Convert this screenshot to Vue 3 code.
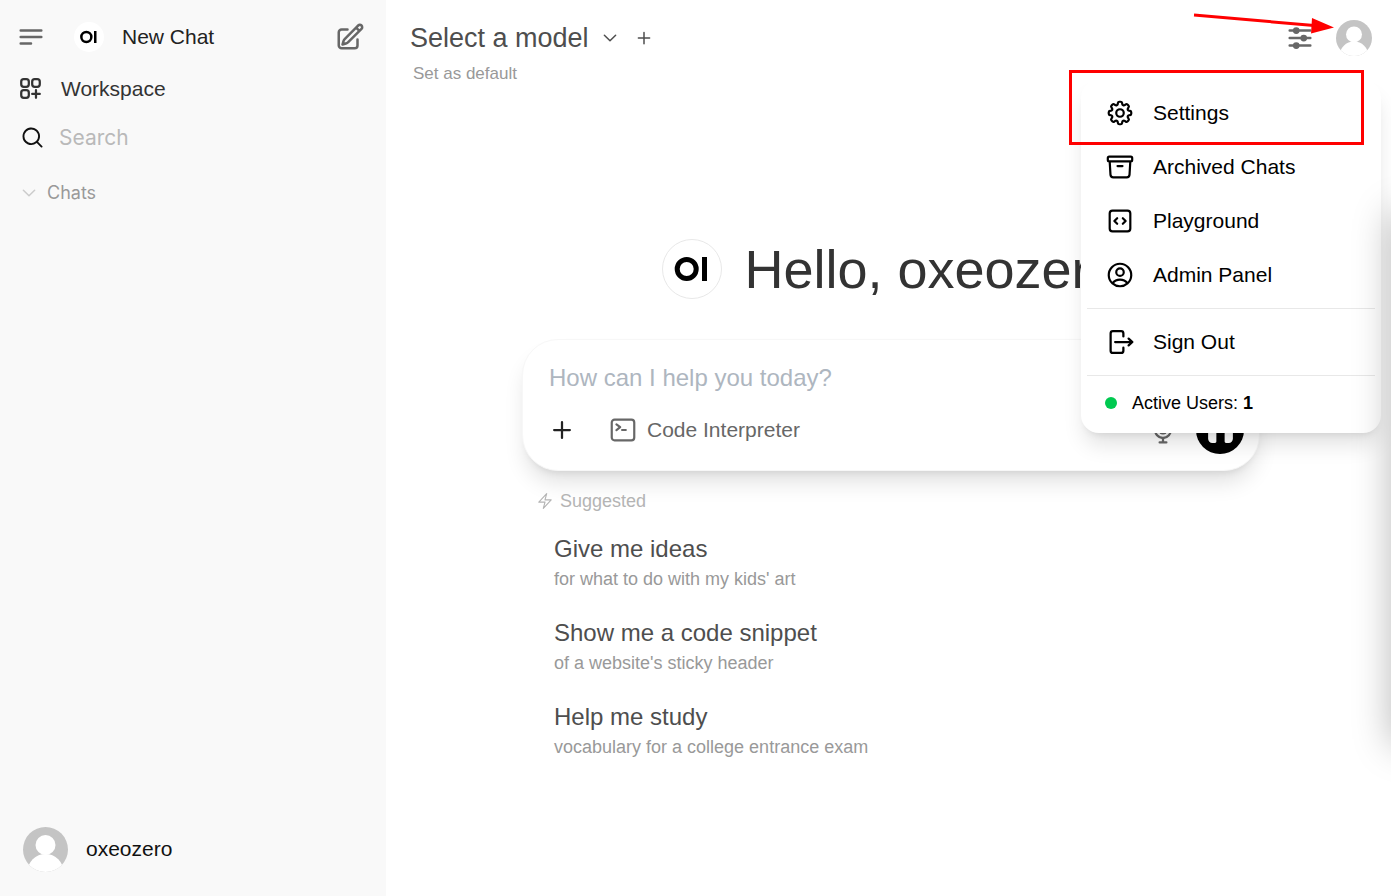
<script setup>
import { ref } from 'vue'

const search = ref('')
const prompt = ref('')
const userName = 'oxeozero'

const menuItems = [
  {
    label: 'Settings',
    paths: [
      'M10.343 3.94c.09-.542.56-.94 1.11-.94h1.093c.55 0 1.02.398 1.11.94l.149.894c.07.424.384.764.78.93.398.164.855.142 1.205-.108l.737-.527a1.125 1.125 0 0 1 1.45.12l.773.774c.39.389.44 1.002.12 1.45l-.527.737c-.25.35-.272.806-.107 1.204.165.397.505.71.93.78l.893.15c.543.09.94.559.94 1.109v1.094c0 .55-.397 1.02-.94 1.11l-.894.149c-.424.07-.764.383-.929.78-.165.398-.143.854.107 1.204l.527.738c.32.447.269 1.06-.12 1.45l-.774.773a1.125 1.125 0 0 1-1.449.12l-.738-.527c-.35-.25-.806-.272-1.203-.107-.398.165-.71.505-.781.929l-.149.894c-.09.542-.56.94-1.11.94h-1.094c-.55 0-1.019-.398-1.11-.94l-.148-.894c-.071-.424-.384-.764-.781-.93-.398-.164-.854-.142-1.204.108l-.738.527c-.447.32-1.06.269-1.45-.12l-.773-.774a1.125 1.125 0 0 1-.12-1.45l.527-.737c.25-.35.272-.806.108-1.204-.165-.397-.506-.71-.93-.78l-.894-.15c-.542-.09-.94-.56-.94-1.109v-1.094c0-.55.398-1.02.94-1.11l.894-.149c.424-.07.765-.383.93-.78.165-.398.143-.854-.108-1.204l-.526-.738a1.125 1.125 0 0 1 .12-1.45l.773-.773a1.125 1.125 0 0 1 1.45-.12l.737.527c.35.25.807.272 1.204.107.397-.165.71-.505.78-.929l.15-.894Z',
      'M15 12a3 3 0 1 1-6 0 3 3 0 0 1 6 0Z',
    ],
  },
  {
    label: 'Archived Chats',
    paths: [
      'm20.25 7.5-.625 10.632a2.25 2.25 0 0 1-2.247 2.118H6.622a2.25 2.25 0 0 1-2.247-2.118L3.75 7.5M10 11.25h4M3.375 7.5h17.25c.621 0 1.125-.504 1.125-1.125v-1.5c0-.621-.504-1.125-1.125-1.125H3.375c-.621 0-1.125.504-1.125 1.125v1.5c0 .621.504 1.125 1.125 1.125Z',
    ],
  },
  {
    label: 'Playground',
    paths: [
      'M14.25 9.75 16.5 12l-2.25 2.25m-4.5 0L7.5 12l2.25-2.25M6 20.25h12A2.25 2.25 0 0 0 20.25 18V6A2.25 2.25 0 0 0 18 3.75H6A2.25 2.25 0 0 0 3.75 6v12A2.25 2.25 0 0 0 6 20.25Z',
    ],
  },
  {
    label: 'Admin Panel',
    paths: [
      'M17.982 18.725A7.488 7.488 0 0 0 12 15.75a7.488 7.488 0 0 0-5.982 2.975m11.963 0a9 9 0 1 0-11.963 0m11.963 0A8.966 8.966 0 0 1 12 21a8.966 8.966 0 0 1-5.982-2.275M15 9.75a3 3 0 1 1-6 0 3 3 0 0 1 6 0Z',
    ],
  },
]

const suggestions = [
  { title: 'Give me ideas', detail: "for what to do with my kids' art" },
  { title: 'Show me a code snippet', detail: "of a website's sticky header" },
  { title: 'Help me study', detail: 'vocabulary for a college entrance exam' },
]
</script>

<template>
  <div class="app">
    <aside class="sidebar">
      <div class="row top-row">
        <button class="icon-btn muted" aria-label="Toggle sidebar">
          <svg class="i30 line w2" viewBox="0 0 24 24"><path d="M3.75 6.75h16.5M3.75 12h16.5m-16.5 5.25H12" /></svg>
        </button>
        <button class="new-chat">
          <svg class="small-logo" viewBox="0 0 60 60" aria-hidden="true">
            <circle cx="30" cy="30" r="30" fill="#fff" />
            <circle cx="24.7" cy="30" r="10" fill="none" stroke="#000" stroke-width="5" />
            <rect x="40" y="18" width="5" height="24" />
          </svg>
          <span>New Chat</span>
          <svg class="i30 line w2 muted edit" viewBox="0 0 24 24" aria-hidden="true"><path d="m16.862 4.487 1.687-1.688a1.875 1.875 0 1 1 2.652 2.652L10.582 16.07a4.5 4.5 0 0 1-1.897 1.13L6 18l.8-2.685a4.5 4.5 0 0 1 1.13-1.897l8.932-8.931Zm0 0L19.5 7.125M18 14v4.75A2.25 2.25 0 0 1 15.75 21H5.25A2.25 2.25 0 0 1 3 18.75V8.25A2.25 2.25 0 0 1 5.25 6H10" /></svg>
        </button>
      </div>

      <a class="row workspace" href="#workspace">
        <svg class="i27 line w2" viewBox="0 0 24 24" aria-hidden="true"><path d="M13.5 16.875h3.375m0 0h3.375m-3.375 0V13.5m0 3.375v3.375M6 10.5h2.25a2.25 2.25 0 0 0 2.25-2.25V6A2.25 2.25 0 0 0 8.25 3.75H6A2.25 2.25 0 0 0 3.75 6v2.25A2.25 2.25 0 0 0 6 10.5Zm0 9.75h2.25A2.25 2.25 0 0 0 10.5 18v-2.25a2.25 2.25 0 0 0-2.25-2.25H6a2.25 2.25 0 0 0-2.25 2.25V18A2.25 2.25 0 0 0 6 20.25Zm9.75-9.75H18a2.25 2.25 0 0 0 2.25-2.25V6A2.25 2.25 0 0 0 18 3.75h-2.25A2.25 2.25 0 0 0 13.5 6v2.25a2.25 2.25 0 0 0 2.25 2.25Z" /></svg>
        <span>Workspace</span>
      </a>

      <label class="row search">
        <svg class="i25 solid" viewBox="0 0 20 20" aria-hidden="true"><path fill-rule="evenodd" d="M9 3.5a5.5 5.5 0 100 11 5.5 5.5 0 000-11zM2 9a7 7 0 1112.452 4.391l3.328 3.329a.75.75 0 11-1.06 1.06l-3.329-3.328A7 7 0 012 9z" /></svg>
        <input v-model="search" type="text" placeholder="Search" aria-label="Search" />
      </label>

      <button class="row chats">
        <svg class="i18 line w2" viewBox="0 0 24 24" aria-hidden="true"><path d="m19.5 8.25-7.5 7.5-7.5-7.5" /></svg>
        <span>Chats</span>
      </button>

      <button class="row user">
        <svg class="avatar-lg" viewBox="0 0 45 45" aria-hidden="true">
          <clipPath id="clip-user"><circle cx="22.5" cy="22.5" r="22.5" /></clipPath>
          <g clip-path="url(#clip-user)">
            <rect width="45" height="45" fill="#c4c4c4" />
            <circle cx="22.5" cy="18" r="10" fill="#fff" />
            <circle cx="22.5" cy="45" r="18" fill="#fff" />
          </g>
        </svg>
        <span>{{ userName }}</span>
      </button>
    </aside>

    <main class="main">
      <header class="header">
        <div>
          <div class="model-row">
            <button class="model">
              <span>Select a model</span>
              <svg class="i18 line w2" viewBox="0 0 24 24" aria-hidden="true"><path d="m19.5 8.25-7.5 7.5-7.5-7.5" /></svg>
            </button>
            <button class="icon-btn" aria-label="Add model">
              <svg class="i18 line w2" viewBox="0 0 24 24"><path d="M12 4.5v15m7.5-7.5h-15" /></svg>
            </button>
          </div>
          <button class="default">Set as default</button>
        </div>
        <div class="header-tools">
          <button class="icon-btn muted" aria-label="Controls">
            <svg class="i30 line w2" viewBox="0 0 24 24">
              <path d="M3.75 6H20.25M3.75 12H20.25M3.75 18H20.25" stroke-linecap="round" />
              <g fill="currentColor" stroke-width="1.6">
                <circle cx="9" cy="6" r="1.9" />
                <circle cx="15" cy="12" r="1.9" />
                <circle cx="9" cy="18" r="1.9" />
              </g>
            </svg>
          </button>
          <button class="icon-btn" aria-label="User menu">
            <svg class="avatar-sm" viewBox="0 0 45 45">
              <clipPath id="clip-header"><circle cx="22.5" cy="22.5" r="22.5" /></clipPath>
              <g clip-path="url(#clip-header)">
                <rect width="45" height="45" fill="#c4c4c4" />
                <circle cx="22.5" cy="18" r="10" fill="#fff" />
                <circle cx="22.5" cy="45" r="18" fill="#fff" />
              </g>
            </svg>
          </button>
        </div>
      </header>

      <section class="center">
        <div class="hello">
          <svg class="big-logo" viewBox="0 0 60 60" aria-hidden="true">
            <circle cx="30" cy="30" r="29.5" fill="#fff" stroke="#e8e8e8" />
            <circle cx="24.7" cy="30" r="9.5" fill="none" stroke="#000" stroke-width="5" />
            <rect x="40" y="18" width="5" height="24" />
          </svg>
          <h1>Hello, {{ userName }}</h1>
        </div>

        <form class="composer" @submit.prevent>
          <input v-model="prompt" type="text" placeholder="How can I help you today?" aria-label="Message" />
          <div class="tools">
            <button type="button" class="icon-btn plus" aria-label="More">
              <svg class="i30 solid" viewBox="0 0 20 20"><path d="M10.75 4.75a.75.75 0 00-1.5 0v4.5h-4.5a.75.75 0 000 1.5h4.5v4.5a.75.75 0 001.5 0v-4.5h4.5a.75.75 0 000-1.5h-4.5v-4.5z" /></svg>
            </button>
            <button type="button" class="code">
              <svg class="i30 line w175" viewBox="0 0 24 24" aria-hidden="true"><path d="m6.75 7.5 3 2.25-3 2.25m4.5 0h3m-9 8.25h13.5A2.25 2.25 0 0 0 21 18V6a2.25 2.25 0 0 0-2.25-2.25H5.25A2.25 2.25 0 0 0 3 6v12a2.25 2.25 0 0 0 2.25 2.25Z" /></svg>
              <span>Code Interpreter</span>
            </button>
            <button type="button" class="icon-btn muted mic" aria-label="Dictate">
              <svg class="i30 solid" viewBox="0 0 20 20"><path d="M7 4a3 3 0 016 0v6a3 3 0 11-6 0V4z" /><path d="M5.5 9.643a.75.75 0 00-1.5 0V10c0 3.06 2.29 5.585 5.25 5.954V17.5h-1.5a.75.75 0 000 1.5h4.5a.75.75 0 000-1.5h-1.5v-1.546A6.001 6.001 0 0016 10v-.357a.75.75 0 00-1.5 0V10a4.5 4.5 0 01-9 0v-.357z" /></svg>
            </button>
            <button type="button" class="call" aria-label="Call">
              <svg class="i33 solid" viewBox="0 0 24 24"><path d="M12 5a7 7 0 0 0-7 7v1.17c.313-.11.65-.17 1-.17h2a1 1 0 0 1 1 1v6a1 1 0 0 1-1 1H6a3 3 0 0 1-3-3v-6a9 9 0 0 1 18 0v6a3 3 0 0 1-3 3h-2a1 1 0 0 1-1-1v-6a1 1 0 0 1 1-1h2c.35 0 .687.06 1 .17V12a7 7 0 0 0-7-7Z" /></svg>
            </button>
          </div>
        </form>

        <div class="suggested">
          <svg class="i18 line w15" viewBox="0 0 24 24" aria-hidden="true"><path d="m3.75 13.5 10.5-11.25L12 10.5h8.25L9.75 21.75 12 13.5H3.75Z" /></svg>
          <span>Suggested</span>
        </div>
        <div class="suggestions">
          <button v-for="s in suggestions" :key="s.title" class="suggestion">
            <span class="s-title">{{ s.title }}</span>
            <span class="s-detail">{{ s.detail }}</span>
          </button>
        </div>
      </section>
    </main>

    <nav class="menu" aria-label="User menu">
      <button v-for="item in menuItems" :key="item.label" class="menu-item">
        <svg class="i30 line w175" viewBox="0 0 24 24" aria-hidden="true"><path v-for="d in item.paths" :key="d" :d="d" /></svg>
        <span>{{ item.label }}</span>
      </button>
      <hr />
      <button class="menu-item">
        <svg class="i30 solid" viewBox="0 0 20 20" aria-hidden="true"><path d="M3 4.25A2.25 2.25 0 015.25 2h5.5A2.25 2.25 0 0113 4.25v2a.75.75 0 01-1.5 0v-2a.75.75 0 00-.75-.75h-5.5a.75.75 0 00-.75.75v11.5c0 .414.336.75.75.75h5.5a.75.75 0 00.75-.75v-2a.75.75 0 011.5 0v2A2.25 2.25 0 0110.75 18h-5.5A2.25 2.25 0 013 15.75V4.25z" /><path d="M6 10a.75.75 0 01.75-.75h9.546l-1.048-.943a.75.75 0 111.004-1.114l2.5 2.25a.75.75 0 010 1.114l-2.5 2.25a.75.75 0 11-1.004-1.114l1.048-.943H6.75A.75.75 0 016 10z" /></svg>
        <span>Sign Out</span>
      </button>
      <hr />
      <div class="active-users">
        <span class="dot"></span>
        <span>Active Users: <b>1</b></span>
      </div>
    </nav>

    <div class="edge-shadow" aria-hidden="true"></div>
    <div class="highlight" aria-hidden="true"></div>
    <svg class="arrow" viewBox="0 0 150 40" aria-hidden="true">
      <path d="M4 15 124 25.5" stroke="#f00" stroke-width="3" />
      <path d="M122 18 144 27.5 121 33.5Z" fill="#f00" />
    </svg>
  </div>
</template>

<style>
body {
  margin: 0;
  background: #fff;
}
</style>

<style scoped>
.app {
  position: relative;
  display: flex;
  min-height: 100vh;
  overflow: hidden;
  font-family: "Liberation Sans", Arial, sans-serif;
  font-size: 21px;
  line-height: 30px;
  color: #111;
}
.app * {
  box-sizing: border-box;
}
button,
input {
  margin: 0;
  padding: 0;
  border: 0;
  background: none;
  font: inherit;
  color: inherit;
  text-align: left;
  outline: none;
}
button {
  cursor: pointer;
}
svg {
  display: block;
  flex: none;
}
.line {
  fill: none;
  stroke: currentColor;
  stroke-linecap: round;
  stroke-linejoin: round;
}
.solid { fill: currentColor; }
.w15 { stroke-width: 1.5; }
.w175 { stroke-width: 1.75; }
.w2 { stroke-width: 2; }
.i18 { width: 18px; height: 18px; }
.i25 { width: 25px; height: 25px; }
.i27 { width: 27px; height: 27px; }
.i30 { width: 30px; height: 30px; }
.i33 { width: 33px; height: 33px; }
.icon-btn { flex: none; }
.muted { color: #676767; }

.sidebar {
  flex: none;
  width: 386px;
  display: flex;
  flex-direction: column;
  padding: 10px 21px 17px 16px;
  background: #f9f9f9;
}
.row {
  display: flex;
  align-items: center;
  height: 49px;
}
.top-row { height: 54px; }
.new-chat {
  flex: 1;
  display: flex;
  align-items: center;
  margin-left: 28px;
  color: #222;
}
.small-logo {
  width: 30px;
  height: 30px;
  margin-right: 18px;
}
.edit { margin-left: auto; }
.workspace {
  padding-left: 1px;
  gap: 17px;
  color: #333;
  text-decoration: none;
}
.search {
  padding-left: 4px;
  gap: 14px;
  font-family: Inter, sans-serif;
}
.search input {
  flex: 1;
  min-width: 0;
}
.search input::placeholder { color: #b9b9b9; opacity: 1; }
.chats {
  margin-top: 6px;
  padding-left: 4px;
  gap: 9px;
  font-family: Inter, sans-serif;
  font-size: 18px;
  color: #999;
}
.chats svg { color: #ccc; }
.user {
  height: 60px;
  margin-top: auto;
  padding-left: 7px;
  gap: 18px;
}
.avatar-lg { width: 45px; height: 45px; }
.avatar-sm { width: 36px; height: 36px; }

.main {
  flex: 1;
  min-width: 0;
  padding-left: 5px;
}
.header {
  display: flex;
  justify-content: space-between;
  align-items: flex-start;
  padding: 20px 19px 0;
}
.model-row {
  display: flex;
  align-items: center;
  gap: 16px;
  height: 36px;
  color: #4e4e4e;
}
.model {
  display: flex;
  align-items: center;
  gap: 12px;
  font-size: 27px;
}
.default {
  display: block;
  margin: 3px 0 0 3px;
  font-size: 17px;
  color: #999;
}
.header-tools {
  display: flex;
  align-items: center;
  gap: 21px;
}

.center {
  max-width: 738px;
  margin: 0 auto;
  padding-top: 150px;
}
.hello {
  display: flex;
  align-items: center;
  justify-content: center;
  gap: 22px;
  height: 60px;
}
.big-logo { width: 60px; height: 60px; }
h1 {
  margin: 0;
  font-size: 54px;
  font-weight: 400;
  line-height: 60px;
  white-space: nowrap;
  color: #333;
}
.composer {
  margin-top: 40px;
  padding: 20px 15px 16px 24px;
  border: 1px solid #f7f7f7;
  border-radius: 36px;
  background: #fff;
  box-shadow: 0 15px 22px -4px rgba(0, 0, 0, 0.12), 0 6px 9px -6px rgba(0, 0, 0, 0.12);
}
.composer input {
  display: block;
  width: 100%;
  padding-left: 2px;
  font-size: 24px;
  line-height: 36px;
}
.composer input::placeholder { color: #aeb6bf; opacity: 1; }
.tools {
  display: flex;
  align-items: center;
  height: 48px;
  margin-top: 10px;
}
.plus { color: #222; }
.code {
  display: flex;
  align-items: center;
  gap: 9px;
  margin-left: 31px;
  color: #676767;
}
.mic { margin-left: auto; }
.call {
  display: flex;
  align-items: center;
  justify-content: center;
  width: 48px;
  height: 48px;
  margin-left: 18px;
  border-radius: 50%;
  background: #000;
  color: #fff;
}
.suggested {
  display: flex;
  align-items: center;
  gap: 6px;
  margin-top: 15px;
  padding-left: 14px;
  font-size: 18px;
  color: #b4b4b4;
}
.suggestions {
  display: flex;
  flex-direction: column;
  gap: 24px;
  margin-top: 18px;
  padding-left: 32px;
}
.suggestion {
  display: flex;
  flex-direction: column;
}
.s-title {
  font-size: 24px;
  color: #4e4e4e;
}
.s-detail {
  font-size: 18px;
  color: #999;
}

.menu {
  position: absolute;
  top: 80px;
  right: 10px;
  width: 300px;
  padding: 6px 6px 9px;
  border-radius: 18px;
  background: #fff;
  color: #000;
  box-shadow: 0 15px 22px -4px rgba(0, 0, 0, 0.12), 0 6px 9px -6px rgba(0, 0, 0, 0.12);
}
.menu-item {
  display: flex;
  align-items: center;
  gap: 18px;
  width: 100%;
  height: 54px;
  padding-left: 18px;
}
hr {
  margin: 6px 0;
  border: 0;
  border-top: 1px solid #e8e8e8;
}
.active-users {
  display: flex;
  align-items: center;
  gap: 15px;
  height: 42px;
  padding-left: 18px;
  font-size: 18px;
}
.dot {
  width: 12px;
  height: 12px;
  border-radius: 50%;
  background: #00c950;
}

.edge-shadow {
  position: absolute;
  top: 213px;
  left: 100%;
  width: 60px;
  height: 532px;
  box-shadow: 0 0 38px rgba(0, 0, 0, 0.28);
  pointer-events: none;
}
.highlight {
  position: absolute;
  top: 70px;
  right: 27px;
  width: 295px;
  height: 75px;
  border: 3px solid #f00;
  pointer-events: none;
}
.arrow {
  position: absolute;
  top: 0;
  right: 51px;
  width: 150px;
  height: 40px;
  pointer-events: none;
}
</style>
